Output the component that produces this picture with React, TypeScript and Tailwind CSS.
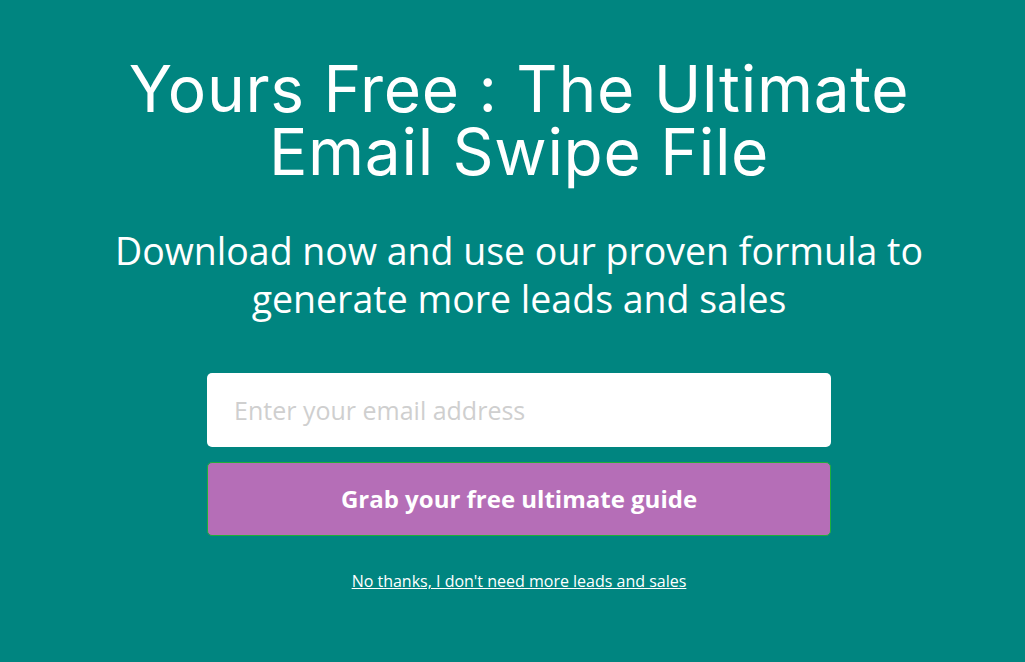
const OptIn = () => {
  return (
    <div className="min-h-[662px] w-full bg-[#008580] pl-[13px] flex flex-col items-center text-white font-['Open_Sans',sans-serif]">
      <h1 className="mt-[57px] text-center text-[64px] leading-[63px] tracking-[0.7px] font-normal font-['Inter','DejaVu_Sans',sans-serif]">
        Yours Free : The Ultimate
        <br />
        Email Swipe File
      </h1>
      <p className="mt-[44px] text-center text-[37.5px] leading-[48px]">
        Download now and use our proven formula to
        <br />
        generate more leads and sales
      </p>
      <form
        className="mt-[50px] w-[624px] flex flex-col gap-[15px]"
        onSubmit={(e) => e.preventDefault()}
      >
        <input
          type="email"
          placeholder="Enter your email address"
          className="h-[74px] w-full rounded-[5px] bg-white px-[27px] text-[25px] text-gray-700 placeholder:text-[#cfcfcf] outline-none"
        />
        <button
          type="submit"
          className="h-[74px] w-full rounded-[5px] border border-[#1fae3a] bg-[#b56eb7] text-[24px] font-bold text-white"
        >
          Grab your free ultimate guide
        </button>
      </form>
      <a href="#" className="mt-[33px] text-[16px] underline">
        No thanks, I don't need more leads and sales
      </a>
    </div>
  );
};

export default function App() {
  return <OptIn />;
}
